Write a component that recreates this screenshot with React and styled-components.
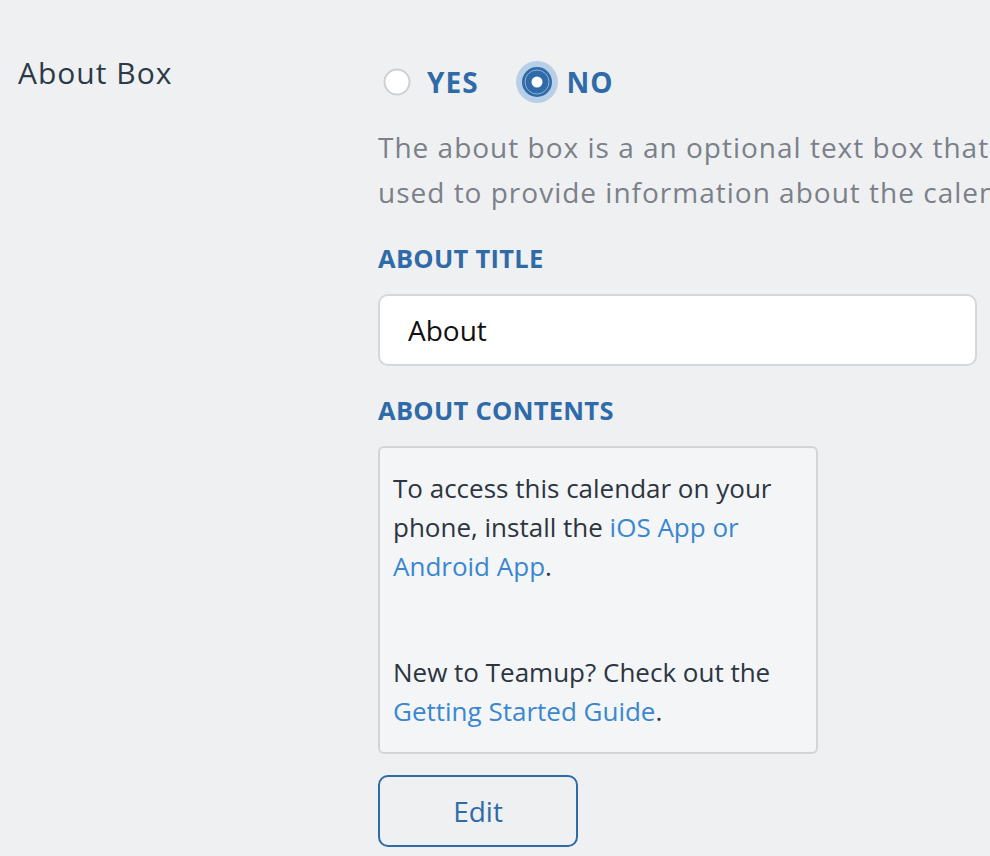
import React from 'react'
import styled, { createGlobalStyle } from 'styled-components'

const GlobalStyle = createGlobalStyle`
  html, body {
    margin: 0;
    padding: 0;
    background: #eff0f2;
    overflow: hidden;
  }
  body {
    font-family: "Open Sans", "Liberation Sans", sans-serif;
  }
`

const Page = styled.div`
  display: grid;
  grid-template-columns: 360px 800px;
  padding: 53px 0 0 18px;
  width: 1200px;
`

const RowLabel = styled.div`
  font-size: 30px;
  line-height: 40px;
  letter-spacing: 1px;
  color: #2c3a47;
`

const Field = styled.div`
  display: flex;
  flex-direction: column;
  align-items: flex-start;
  padding-top: 8px;
`

const RadioRow = styled.div`
  display: flex;
  align-items: center;
  height: 42px;
`

const RadioOption = styled.label`
  display: flex;
  align-items: center;
  gap: ${p => (p.checked ? '9px' : '16px')};
  margin-right: ${p => (p.checked ? '0' : '37px')};
  margin-left: ${p => (p.checked ? '0' : '5px')};
  font-size: 28px;
  font-weight: 700;
  letter-spacing: 1px;
  color: #2f6ba8;
  cursor: pointer;
`

const Description = styled.p`
  margin: 22px 0 0;
  width: 770px;
  font-size: 28px;
  line-height: 45px;
  letter-spacing: 1px;
  color: #7b8089;
`

const SectionLabel = styled.div`
  margin-top: ${p => p.top}px;
  font-size: 25.5px;
  line-height: 30px;
  font-weight: 700;
  color: #2f6ba8;
  letter-spacing: 0.3px;
`

const TextInput = styled.input`
  box-sizing: border-box;
  margin-top: 21px;
  width: 599px;
  height: 72px;
  padding: 0 28px;
  border: 2px solid #d6d7da;
  border-radius: 10px;
  background: #fff;
  font-family: inherit;
  font-size: 28px;
  color: #111;
  outline: none;
`

const ContentBox = styled.div`
  box-sizing: border-box;
  margin-top: 21px;
  width: 440px;
  height: 308px;
  padding: 21px 12px 0 13px;
  border: 2px solid #d3d4d7;
  border-radius: 6px;
  background: #f4f5f7;
  font-size: 26px;
  line-height: 39px;
  color: #2c3540;
`

const Para = styled.p`
  margin: ${p => (p.gap ? '67px 0 0' : '0')};
`

const Link = styled.a`
  color: #3a87d0;
  text-decoration: none;
`

const EditButton = styled.button`
  margin-top: 21px;
  width: 200px;
  height: 72px;
  border: 2px solid #2f6ba8;
  border-radius: 10px;
  background: transparent;
  font-family: inherit;
  font-size: 28px;
  color: #2f6ba8;
  cursor: pointer;
`

function RadioDot({ checked }) {
  if (!checked) {
    return (
      <svg width="28" height="28" viewBox="0 0 28 28">
        <circle cx="14" cy="14" r="12.5" fill="#fff" stroke="#cfd0d3" strokeWidth="2" />
      </svg>
    )
  }
  return (
    <svg width="42" height="42" viewBox="0 0 42 42">
      <circle cx="21" cy="21" r="21" fill="#b8cfe8" />
      <circle cx="21" cy="21" r="15" fill="#2f6ba8" />
      <circle cx="21" cy="21" r="12" fill="none" stroke="#8fb2d8" strokeWidth="1" />
      <circle cx="21" cy="21" r="5.5" fill="#fff" />
    </svg>
  )
}

export default function App() {
  return (
    <>
      <GlobalStyle />
      <Page>
        <RowLabel>About Box</RowLabel>
        <Field>
          <RadioRow>
            <RadioOption>
              <RadioDot />
              YES
            </RadioOption>
            <RadioOption checked>
              <RadioDot checked />
              NO
            </RadioOption>
          </RadioRow>
          <Description>
            The about box is a an optional text box that can be used to provide information about the calendar.
          </Description>
          <SectionLabel top={28}>ABOUT TITLE</SectionLabel>
          <TextInput defaultValue="About" />
          <SectionLabel top={29}>ABOUT CONTENTS</SectionLabel>
          <ContentBox>
            <Para>
              To access this calendar on your phone, install the <Link href="#">iOS App or Android App</Link>.
            </Para>
            <Para gap>
              New to Teamup? Check out the <Link href="#">Getting Started Guide</Link>.
            </Para>
          </ContentBox>
          <EditButton>Edit</EditButton>
        </Field>
      </Page>
    </>
  )
}
